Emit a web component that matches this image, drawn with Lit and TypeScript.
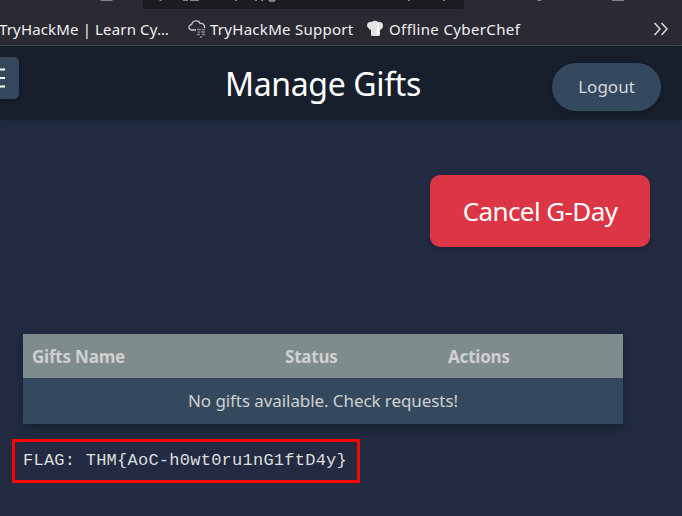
import { LitElement, html, css } from "lit";
import { customElement } from "lit/decorators.js";

@customElement("browser-chrome")
class BrowserChrome extends LitElement {
  static styles = css`
    :host { display: block; height: 46px; box-sizing: border-box; background: #2b2a33; border-bottom: 1px solid #4a4f58; overflow: hidden; color: #f0f0f3; }
    .toolbar { display: block; height: 9px; width: 682px; }
    .bookmarks { display: flex; align-items: center; height: 36px; padding-top: 4px; box-sizing: border-box; }
    .item { display: flex; align-items: center; white-space: nowrap; height: 36px; font: 15px/36px "Noto Sans", sans-serif; }
    .learn { width: 189px; margin-left: -1px; letter-spacing: 0.15px; }
    .support { width: 179px; letter-spacing: 0.28px; }
    .chef { width: 286px; letter-spacing: 0.38px; }
    .icon { width: 18px; height: 18px; margin-right: 4px; flex: none; }
    .more { width: 16px; height: 16px; }
  `;
  render() {
    return html`
      <svg class="toolbar" viewBox="0 0 682 9">
        <path d="M143 0h321v6q0 3-3 3H146q-3 0-3-3z" fill="#1c1b22" />
        <g fill="#83838a">
          <path d="M100 0h13l-1 1h-11zM183 0h5v1h-5zM190 0h9v1h-9zM159 0h3l-1 1h-1zM235 0h2v1h-2zM255 0h2v1h-2zM261 0h2v1h-2zM268 0h8l-2 2h-4zM408 0h2v1h-2zM443 0h2v1h-2zM537 0h5l-1 1h-3zM612 0h12v1h-12z" />
        </g>
      </svg>
      <nav class="bookmarks">
        <span class="item learn">TryHackMe | Learn Cy…</span>
        <span class="item support">
          <svg class="icon" viewBox="0 0 18 18" fill="none" stroke="#c9c9ce" stroke-width="1.3">
            <path d="M8 10H4.500C0 10-.3 5 3.600 4.700 4.500-.2 11-.2 12 3.500c3-.5 5 1.500 4.500 4.500" />
            <path d="M9 9.500h4M14 9.500h3M10 12h2M13 12h4M9 14.500h3M14 14.500h3M12 17h2" stroke="#87878e" stroke-width="1.5" />
          </svg>TryHackMe Support
        </span>
        <span class="item chef">
          <svg class="icon" viewBox="0 0 18 18">
            <path d="M4 15.500V10Q0 8 0 5A3.500 3.500 0 0 1 4.500 2Q8-.5 11.500 2 16 1.500 16 5.500q0 3-3 4.500v5.500q-4.500 1-9 0z" fill="#e4e4e4" />
            <path d="M11 3v12" stroke="#f8f8f8" stroke-width="2" />
            <path d="M7 8v7" stroke="#d4d4d6" />
          </svg>Offline CyberChef
        </span>
        <svg class="more" viewBox="0 0 16 16" fill="none" stroke="#e4e4e7" stroke-width="1.4">
          <path d="M1.500 2 7 8l-5.500 6M8.500 2 14 8l-5.500 6" />
        </svg>
      </nav>`;
  }
}

@customElement("app-root")
class AppRoot extends LitElement {
  static styles = css`
    :host { display: block; width: 682px; height: 516px; overflow: hidden; background: #222b42; font-family: "Noto Sans", sans-serif; }
    header { height: 74px; background: #171e2c; display: grid; grid-template-columns: 19px 1fr 109px; padding-right: 21px; box-shadow: 0 1px 5px #1b2938; }
    .menu { margin-top: 11px; height: 42px; background: #34495e; border-radius: 0 5px 5px 0; box-shadow: 0 2px 5px #0003; }
    h1 { margin: 0; padding-left: 206px; color: #fff; font-weight: 400; font-size: 32px; line-height: 76px; white-space: nowrap; letter-spacing: -0.35px; }
    .logout { margin-top: 17px; height: 48px; border-radius: 24px; background: #34495e; color: #d4d9de; text-align: center; font-size: 17px; line-height: 48px; box-shadow: 0 2px 5px #0003; }
    .actions { display: flex; justify-content: flex-end; padding: 55px 32px 0 0; }
    .cancel { width: 220px; height: 72px; border-radius: 10px; background: #dc3545; color: #fff; text-align: center; font-size: 26px; line-height: 73px; box-shadow: 0 3px 6px #0003; white-space: nowrap; letter-spacing: -0.6px; }
    .table { margin: 87px 0 0 23px; width: 600px; height: 90px; box-shadow: 0 4px 10px #14202b; color: #d0d0d0; white-space: nowrap; }
    .head { display: grid; grid-template-columns: 253px 163px 1fr; height: 44px; padding-left: 9px; box-sizing: border-box; background: #7f8c8d; font-weight: 700; font-size: 17px; line-height: 45px; letter-spacing: -0.2px; }
    .empty { height: 46px; background: #34495e; text-align: center; font-size: 17px; line-height: 46px; letter-spacing: -0.08px; }
    .flag { display: block; margin: 15px 0 0 12px; width: 348px; height: 44px; box-sizing: border-box; border: 3px solid #f00; padding-left: 8px; font: 17px/38px "Liberation Mono", monospace; letter-spacing: 0.25px; color: #dedede; white-space: nowrap; }
  `;
  render() {
    return html`
      <browser-chrome></browser-chrome>
      <header>
        <svg class="menu" viewBox="0 0 19 42"><path d="M0 12.500h5M0 21h5M0 29.500h5" stroke="#fff" stroke-width="2" /></svg>
        <h1>Manage Gifts</h1>
        <div class="logout">Logout</div>
      </header>
      <div class="actions"><div class="cancel">Cancel G-Day</div></div>
      <div class="table">
        <div class="head"><span>Gifts Name</span><span>Status</span><span>Actions</span></div>
        <div class="empty">No gifts available. Check requests!</div>
      </div>
      <code class="flag">FLAG: THM{AoC-h0wt0ru1nG1ftD4y}</code>`;
  }
}
